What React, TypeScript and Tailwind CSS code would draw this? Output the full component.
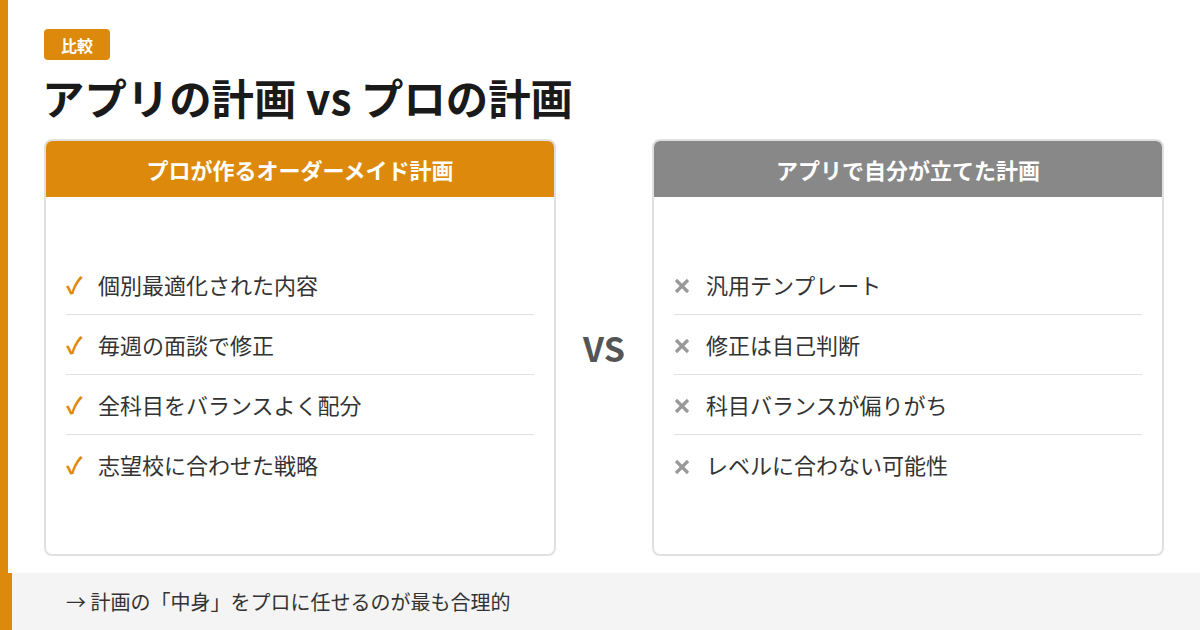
const proItems = ['個別最適化された内容', '毎週の面談で修正', '全科目をバランスよく配分', '志望校に合わせた戦略'];
const appItems = ['汎用テンプレート', '修正は自己判断', '科目バランスが偏りがち', 'レベルに合わない可能性'];

const Card = ({ title, items, good }: { title: string; items: string[]; good: boolean }) => (
  <div className="flex-1 flex flex-col border-2 border-[#e0e0e0] rounded-lg overflow-hidden bg-white">
    <div
      className={`h-[56px] flex items-center justify-center text-white text-[22px] font-bold ${
        good ? 'bg-[#dd8a0c]' : 'bg-[#888888]'
      }`}
    >
      {title}
    </div>
    <div className="flex-1 flex flex-col justify-center px-5 pb-[2px]">
      {items.map((item, i) => (
        <div
          key={item}
          className={`h-[60px] flex items-center ${i < items.length - 1 ? 'border-b border-[#e0e0e0]' : ''}`}
        >
          {good ? (
            <span className="w-5 mr-3 text-[23px] font-bold text-[#dd8a0c]">✓</span>
          ) : (
            <span className="w-5 mr-3 mt-[4px] flex items-center">
              <svg width="16" height="16" viewBox="0 0 16 16" fill="none" stroke="#999999" strokeWidth="3.2">
                <line x1="2" y1="2" x2="14" y2="14" />
                <line x1="14" y1="2" x2="2" y2="14" />
              </svg>
            </span>
          )}
          <span className="text-[22px] text-[#333333]">{item}</span>
        </div>
      ))}
    </div>
  </div>
);

export default function App() {
  return (
    <div
      className="w-[1200px] h-[630px] flex flex-col bg-white overflow-hidden"
      style={{ fontFamily: '"Noto Sans CJK JP", "Noto Sans", sans-serif' }}
    >
      <div className="flex-1 flex flex-col border-l-8 border-[#dd8a0c] pl-9 pr-9 pt-[29px] pb-[17px]">
        <div className="flex">
          <span className="h-[31px] px-[17px] flex items-center rounded bg-[#dd8a0c] text-white text-[16px] font-bold">
            比較
          </span>
        </div>
        <h1 className="mt-[12px] text-[42.4px] leading-[50px] font-bold text-[#1a1a1a] -ml-[2px]">
          アプリの計画 vs プロの計画
        </h1>
        <div className="flex-1 flex mt-[17px]">
          <Card title="プロが作るオーダーメイド計画" items={proItems} good />
          <div className="w-[96px] flex items-center justify-center text-[34px] font-bold text-[#555555]">VS</div>
          <Card title="アプリで自分が立てた計画" items={appItems} good={false} />
        </div>
      </div>
      <div className="h-[57px] flex items-center border-l-[12px] border-[#dd8a0c] bg-[#f4f4f4] pl-[54px]">
        <span className="text-[20px] text-[#333333]">→ 計画の「中身」をプロに任せるのが最も合理的</span>
      </div>
    </div>
  );
}
